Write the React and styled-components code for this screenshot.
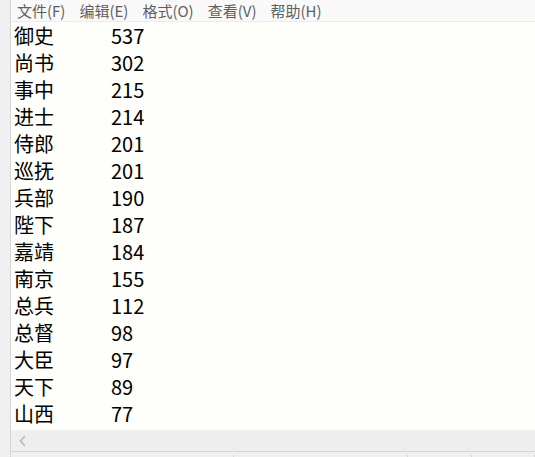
import React from 'react'
import styled, { createGlobalStyle } from 'styled-components'

const rows = [
  ['御史', 537], ['尚书', 302], ['事中', 215], ['进士', 214], ['侍郎', 201],
  ['巡抚', 201], ['兵部', 190], ['陛下', 187], ['嘉靖', 184], ['南京', 155],
  ['总兵', 112], ['总督', 98], ['大臣', 97], ['天下', 89], ['山西', 77],
]

const menus = ['文件(F)', '编辑(E)', '格式(O)', '查看(V)', '帮助(H)']

const App = () => (
  <Window>
    <GlobalStyle />
    <Gutter />
    <Main>
      <MenuBar>
        {menus.map((m) => <MenuItem key={m}>{m}</MenuItem>)}
      </MenuBar>
      <Editor>
        {rows.map(([word, count]) => (
          <Line key={word}>
            <Word>{word}</Word>
            <Count>{count}</Count>
          </Line>
        ))}
      </Editor>
      <HScroll>
        <Arrow>
          <svg width="8" height="12" viewBox="0 0 8 12">
            <path d="M6 1 L1.5 6 L6 11" fill="none" stroke="#b9b9b9" strokeWidth="1.6" />
          </svg>
        </Arrow>
      </HScroll>
      <StatusBar>
        <StatusCell $w={224} />
        <StatusCell $w={175} />
        <StatusCell $w={63} />
        <StatusCell $w={63} />
      </StatusBar>
    </Main>
  </Window>
)

const GlobalStyle = createGlobalStyle`
  html, body { margin: 0; padding: 0; }
  body {
    width: 535px;
    height: 457px;
    overflow: hidden;
    background: #fefefa;
    font-family: "Noto Sans CJK SC", "Noto Sans", sans-serif;
  }
`

const Window = styled.div`
  display: flex;
  width: 535px;
  height: 457px;
  overflow: hidden;
`

const Gutter = styled.div`
  width: 10px;
  flex-shrink: 0;
  background: #f0f0f0;
  border-right: 1px solid #d6d6d6;
`

const Main = styled.div`
  flex: 1;
  display: flex;
  flex-direction: column;
  min-width: 0;
`

const MenuBar = styled.div`
  height: 21px;
  display: flex;
  align-items: center;
  gap: 14px;
  padding-left: 6px;
  background: #f9f9f9;
  border-bottom: 1px solid #ececec;
`

const MenuItem = styled.span`
  font-family: "Noto Sans CJK SC", sans-serif;
  font-size: 15px;
  line-height: 20px;
  color: #5f5f5f;
`

const Editor = styled.div`
  flex: 1;
  padding: 0 0 0 3px;
  background: #fefefa;
`

const Line = styled.div`
  display: flex;
  height: 27px;
  align-items: center;
  font-size: 20px;
  color: #000;
`

const Word = styled.span`
  width: 97px;
  font-family: "Noto Sans CJK SC", sans-serif;
`

const Count = styled.span`
  font-family: "Noto Sans CJK SC", sans-serif;
`

const HScroll = styled.div`
  height: 20px;
  display: flex;
  align-items: center;
  background: #eeeeee;
  border-top: 1px solid #f2f2f2;
`

const Arrow = styled.div`
  width: 20px;
  display: flex;
  justify-content: center;
  align-items: center;
  padding-left: 2px;
`

const StatusBar = styled.div`
  height: 5px;
  display: flex;
  background: #efefef;
  border-top: 1px solid #d6d6d6;
`

const StatusCell = styled.div`
  width: ${(p) => p.$w}px;
  border-right: 1px solid #d6d6d6;
  margin-top: 3px;
`

export default App
